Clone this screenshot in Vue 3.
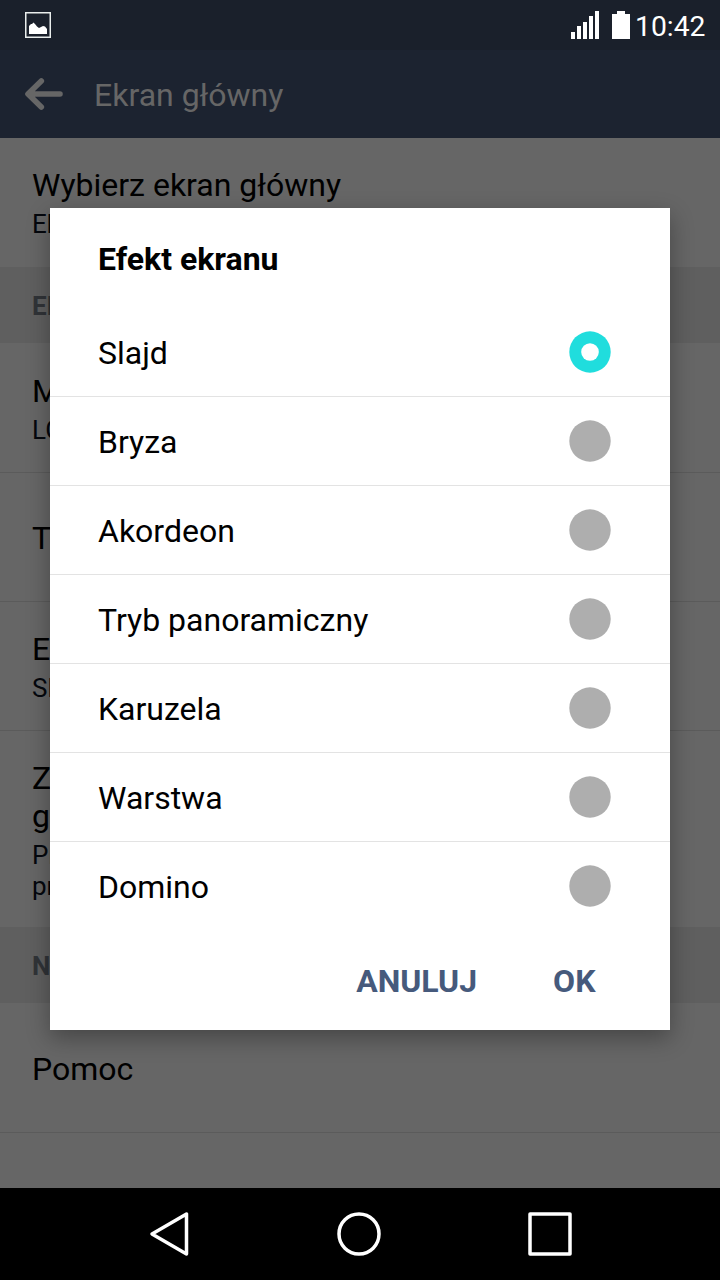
<script setup>
import { ref } from 'vue'

const settings = [
  { title: ['Wybierz ekran główny'], sub: ['Ekran'], kind: 'first' },
  { header: 'EKR' },
  { title: ['Mo'], sub: ['LG'], kind: 'plain' },
  { title: ['Ta'], kind: 'line' },
  { title: ['Efe'], sub: ['Slajd'], kind: 'line double' },
  { title: ['Zap', 'gł'], sub: ['Prze', 'prze'], kind: 'line tall' },
  { header: 'NAR' },
  { title: ['Pomoc'], kind: '' },
]
const effects = ['Slajd', 'Bryza', 'Akordeon', 'Tryb panoramiczny', 'Karuzela', 'Warstwa', 'Domino']
const selected = ref('Slajd')
</script>

<template>
  <div class="phone">
    <header class="status">
      <svg class="picture" width="26" height="26" viewBox="0 0 26 26">
        <rect x=".75" y=".75" width="24.5" height="24.5" fill="none" stroke="#e9edec" stroke-width="1.5" />
        <path d="M4 22V14L6 12H7L8.500 10.500L10 12L12 14.500L14 16L16 15L18 14L20 14.500L22 17V22Z" fill="#fff" />
      </svg>
      <div class="right">
        <svg width="28" height="28" viewBox="0 0 28 28" fill="#fff" shape-rendering="crispEdges">
          <rect x="0" y="21" width="4" height="7" />
          <rect x="6" y="15" width="4" height="13" />
          <rect x="12" y="11" width="4" height="17" />
          <rect x="18" y="5" width="4" height="23" />
          <rect x="24" y="0" width="4" height="28" />
        </svg>
        <svg class="battery" width="18" height="28" viewBox="0 0 18 28" shape-rendering="crispEdges">
          <path d="M0 3H5V0H13V3H18V28H0Z" fill="#fff" />
        </svg>
        <span class="clock">10:42</span>
      </div>
    </header>
    <div class="appbar">
      <svg width="38" height="32" viewBox="0 0 38 32" fill="none" stroke="#666" stroke-width="5.600" stroke-linecap="round" stroke-linejoin="round">
        <path d="M35 16H4M16.300 3L3 16L16.300 29" />
      </svg>
      <h1>Ekran główny</h1>
    </div>
    <main class="list">
      <template v-for="(s, i) in settings" :key="i">
        <div v-if="s.header" class="section">{{ s.header }}</div>
        <div v-else class="item" :class="s.kind">
          <span v-for="t in s.title" :key="t" class="title">{{ t }}</span>
          <span v-for="t in s.sub" :key="t" class="sub">{{ t }}</span>
        </div>
      </template>
      <div class="rest"></div>
    </main>
    <nav class="nav">
      <svg width="720" height="92" viewBox="0 0 720 92" fill="none" stroke="#fff" stroke-width="3.500" stroke-linejoin="round">
        <path d="M152 46L186.500 26V66Z" />
        <circle cx="359" cy="46" r="20" />
        <rect x="530" y="26" width="40" height="40" />
      </svg>
    </nav>
    <section class="dialog">
      <h2>Efekt ekranu</h2>
      <div v-for="e in effects" :key="e" class="option" @click="selected = e">
        <span>{{ e }}</span>
        <svg class="radio" :class="{ on: selected === e }" width="42" height="42" viewBox="0 0 42 42">
          <circle cx="21" cy="21" r="20.700" />
          <circle v-if="selected === e" class="hole" cx="21" cy="21" r="8.800" />
        </svg>
      </div>
      <footer>
        <span>ANULUJ</span>
        <span>OK</span>
      </footer>
    </section>
  </div>
</template>

<style>
body {
  background: #000;
}
</style>

<style scoped>
.phone {
  position: relative;
  width: 720px;
  height: 1280px;
  overflow: hidden;
  display: flex;
  flex-direction: column;
  background: #666;
  font-family: Roboto, "Noto Sans", sans-serif;
  font-size: 32px;
  color: #000;
}
.status {
  height: 50px;
  box-sizing: border-box;
  padding: 0 14px 0 25px;
  display: flex;
  align-items: center;
  justify-content: space-between;
  background: #1a202b;
}
.right {
  display: flex;
  align-items: center;
}
.battery {
  margin-left: 13px;
}
.clock {
  width: 71px;
  margin-left: 5px;
  font-size: 28.3px;
  line-height: 53px;
  height: 50px;
  color: #fff;
}
.appbar {
  height: 88px;
  padding-left: 25px;
  display: flex;
  align-items: center;
  gap: 31px;
  background: #1c2330;
}
h1 {
  margin: 2px 0 0;
  font-size: 32px;
  font-weight: 400;
  color: #666;
}
.list {
  flex: 1;
  display: flex;
  flex-direction: column;
}
.item {
  height: 129px;
  box-sizing: border-box;
  padding: 2px 32px 0;
  display: flex;
  flex-direction: column;
  justify-content: center;
  white-space: nowrap;
}
.item.line,
.rest {
  border-top: 1px solid #5b5b5b;
}
.item.first,
.item.plain,
.item.double,
.item.tall {
  justify-content: flex-start;
  padding-top: 28px;
}
.item.plain {
  padding-top: 29px;
}
.item.tall {
  height: 197px;
}
.title {
  line-height: 38px;
}
.sub {
  font-size: 26px;
  line-height: 31px;
  color: #04070d;
}
.title + .sub {
  padding-top: 5px;
}
.section {
  height: 76px;
  box-sizing: border-box;
  padding: 2px 32px 0;
  display: flex;
  align-items: center;
  background: #5f5f5f;
  font-size: 26px;
  font-weight: 700;
  color: #303337;
}
.nav {
  height: 92px;
  background: #000;
}
.nav svg {
  display: block;
}
.dialog {
  position: absolute;
  left: 50px;
  top: 208px;
  width: 620px;
  height: 822px;
  background: #fff;
  box-shadow: 0 8px 22px rgba(0, 0, 0, .32);
}
h2 {
  margin: 0;
  padding: 1px 48px 0;
  height: 99px;
  font-size: 32px;
  line-height: 101px;
  font-weight: 700;
}
.option {
  height: 89px;
  box-sizing: border-box;
  padding: 0 59px 0 48px;
  display: flex;
  align-items: center;
  justify-content: space-between;
  border-bottom: 1px solid #e3e3e3;
}
.option span {
  padding-top: 2px;
}
.option:nth-last-child(2) {
  border-bottom-color: transparent;
}
.radio {
  fill: #aeaeae;
}
.radio.on {
  fill: #20dddd;
}
.radio .hole {
  fill: #fff;
}
footer {
  display: flex;
  justify-content: flex-end;
  gap: 76px;
  padding: 0 74.5px 0 0;
  line-height: 101px;
  height: 100px;
  font-weight: 700;
  color: #465a7c;
}
</style>
